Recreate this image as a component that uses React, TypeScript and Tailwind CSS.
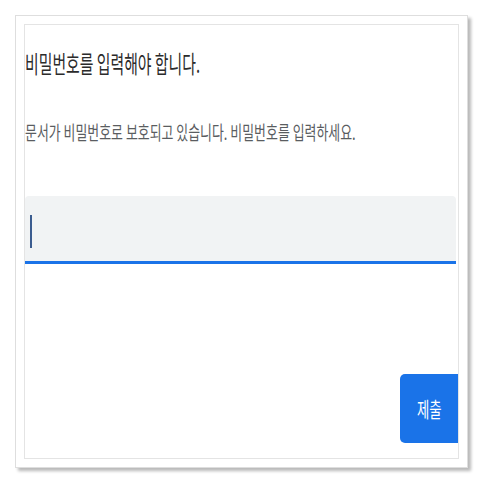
export default function App() {
  return (
    <div className="min-h-screen bg-white pl-[15px] pt-[15px] font-['Noto_Sans_CJK_KR','Noto_Sans',sans-serif]">
      {/* outer frame */}
      <div className="w-[453px] h-[453px] border border-[#dedede] bg-white p-2 shadow-[3px_3px_3px_rgba(0,0,0,0.28)]">
        {/* dialog */}
        <div className="flex h-full w-full flex-col overflow-hidden border border-[#e4e4e4] bg-white">
          <h1 className="mt-[22px] h-[32px] whitespace-nowrap text-[24px] leading-[32px] font-normal text-[#2b2b2b]">
            <span className="inline-block origin-left scale-x-[0.62]">비밀번호를 입력해야 합니다.</span>
          </h1>
          <p className="mt-[40px] h-[26px] whitespace-nowrap text-[19px] leading-[26px] text-[#5a5d61]">
            <span className="inline-block origin-left scale-x-[0.68]">
              문서가 비밀번호로 보호되고 있습니다. 비밀번호를 입력하세요.
            </span>
          </p>
          {/* password input */}
          <div className="mt-[51px] mr-[2px] h-[68px] rounded-t-[4px] border-b-[3px] border-[#1a73e8] bg-[#f1f3f4] pl-[5px] pt-[19px]">
            <div className="h-[33px] w-[2px] bg-[#3b5c8f]" />
          </div>
          <div className="mt-[110px] flex justify-end">
            <button className="flex h-[69px] w-[58px] items-center justify-center rounded-l-[5px] bg-[#1a73e8] text-[21px] leading-none text-white">
              <span className="inline-block scale-x-[0.64]">제출</span>
            </button>
          </div>
        </div>
      </div>
    </div>
  );
}
